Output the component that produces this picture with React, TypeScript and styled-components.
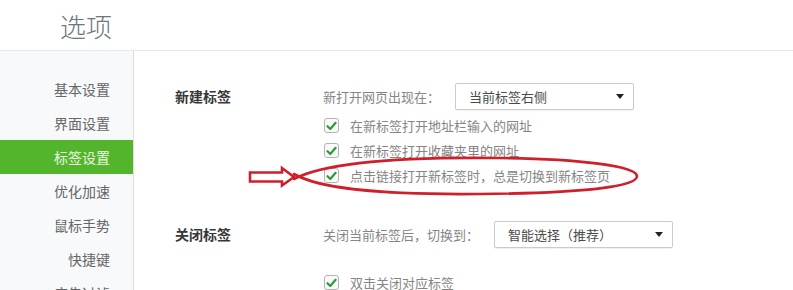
import React from 'react';
import styled, { createGlobalStyle } from 'styled-components';

const GlobalStyle = createGlobalStyle`
  html, body {
    margin: 0;
    padding: 0;
    background: #ffffff;
    font-family: "Noto Sans CJK SC", "Noto Sans", sans-serif;
  }
`;

const Page = styled.div`
  position: relative;
  width: 793px;
  height: 290px;
  overflow: hidden;
  background: #fff;
`;

const Header = styled.header`
  height: 50px;
  border-bottom: 1px solid #e8e8e8;
  padding-left: 60px;
  display: flex;
  align-items: center;
`;

const Title = styled.h1`
  margin: 0;
  font-size: 26px;
  font-weight: 300;
  color: #6c7580;
`;

const Body = styled.div`
  display: flex;
  height: 239px;
`;

const Sidebar = styled.nav`
  width: 134px;
  flex-shrink: 0;
  background: #f7f9fa;
  border-right: 1px solid #dedede;
  padding-top: 21px;
  box-sizing: border-box;
`;

const NavItem = styled.div<{ $active?: boolean }>`
  height: 34px;
  line-height: 34px;
  text-align: right;
  padding-right: 23px;
  font-size: 14px;
  color: ${(p) => (p.$active ? '#eaf6e2' : '#666')};
  background: ${(p) => (p.$active ? '#53b52c' : 'transparent')};
`;

const Main = styled.main`
  flex: 1;
  padding: 32px 0 0 41px;
`;

const Section = styled.section<{ $gap?: number }>`
  display: flex;
  margin-bottom: ${(p) => p.$gap ?? 0}px;
`;

const SectionLabel = styled.div`
  width: 148px;
  flex-shrink: 0;
  line-height: 27px;
  font-size: 14px;
  font-weight: 700;
  color: #383838;
`;

const Controls = styled.div`
  display: flex;
  flex-direction: column;
`;

const SelectRow = styled.div<{ $mb?: number }>`
  display: flex;
  align-items: center;
  height: 27px;
  margin-bottom: ${(p) => p.$mb ?? 3}px;
  font-size: 13px;
  color: #858585;
`;

const Select = styled.div<{ $ml: number }>`
  margin-left: ${(p) => p.$ml}px;
  width: 179px;
  height: 27px;
  box-sizing: border-box;
  border: 1px solid #cbcbcb;
  border-radius: 2px;
  box-shadow: 0 1px 1px rgba(0, 0, 0, 0.06);
  display: flex;
  align-items: center;
  justify-content: space-between;
  padding: 0 9px 0 13px;
  font-size: 13px;
  color: #4a4a4a;
  background: #fff;
`;

const Caret = styled.span`
  width: 0;
  height: 0;
  border-left: 4.5px solid transparent;
  border-right: 4.5px solid transparent;
  border-top: 5px solid #222;
`;

const CheckRow = styled.label`
  display: flex;
  align-items: center;
  height: 25px;
  font-size: 13px;
  color: #858585;
`;

const Box = styled.span`
  width: 15px;
  height: 15px;
  box-sizing: border-box;
  margin-left: 1px;
  margin-right: 11px;
  border: 1px solid #b3b3b3;
  border-radius: 3px;
  background: #fafafa;
  display: flex;
  align-items: center;
  justify-content: center;
`;

const Overlay = styled.svg`
  position: absolute;
  left: 0;
  top: 0;
  pointer-events: none;
`;

const Check = () => (
  <Box>
    <svg width="11" height="10" viewBox="0 0 11 10">
      <path d="M1.5 5.2 L4.3 8 L9.6 1.8" fill="none" stroke="#2f9a37" strokeWidth="2.2" strokeLinecap="round" strokeLinejoin="round" />
    </svg>
  </Box>
);

const navItems = ['基本设置', '界面设置', '标签设置', '优化加速', '鼠标手势', '快捷键', '广告过滤'];

export default function App() {
  return (
    <Page>
      <GlobalStyle />
      <Header>
        <Title>选项</Title>
      </Header>
      <Body>
        <Sidebar>
          {navItems.map((n) => (
            <NavItem key={n} $active={n === '标签设置'}>
              {n}
            </NavItem>
          ))}
        </Sidebar>
        <Main>
          <Section $gap={33}>
            <SectionLabel>新建标签</SectionLabel>
            <Controls>
              <SelectRow>
                新打开网页出现在：
                <Select $ml={15}>
                  当前标签右侧
                  <Caret />
                </Select>
              </SelectRow>
              <CheckRow>
                <Check />
                在新标签打开地址栏输入的网址
              </CheckRow>
              <CheckRow>
                <Check />
                在新标签打开收藏夹里的网址
              </CheckRow>
              <CheckRow>
                <Check />
                点击链接打开新标签时，总是切换到新标签页
              </CheckRow>
            </Controls>
          </Section>
          <Section>
            <SectionLabel>关闭标签</SectionLabel>
            <Controls>
              <SelectRow $mb={22}>
                关闭当前标签后，切换到：
                <Select $ml={15}>
                  智能选择（推荐）
                  <Caret />
                </Select>
              </SelectRow>
              <CheckRow>
                <Check />
                双击关闭对应标签
              </CheckRow>
            </Controls>
          </Section>
        </Main>
      </Body>
      <Overlay width="793" height="290" viewBox="0 0 793 290">
        <path
          d="M250 172.5 L282 172.5 L282 168 L294 177 L282 185.5 L282 181.5 L250 181.5 Z"
          fill="none"
          stroke="#cf1f2b"
          strokeWidth="2.6"
          strokeLinejoin="miter"
        />
        <path
          d="M294 179 C 330 160, 420 157, 500 158 C 580 159, 636 166, 637 176 C 638 186, 590 193, 480 194 C 380 195, 320 189, 294 174"
          fill="none"
          stroke="#cf1f2b"
          strokeWidth="2.6"
          strokeLinecap="round"
        />
      </Overlay>
    </Page>
  );
}
